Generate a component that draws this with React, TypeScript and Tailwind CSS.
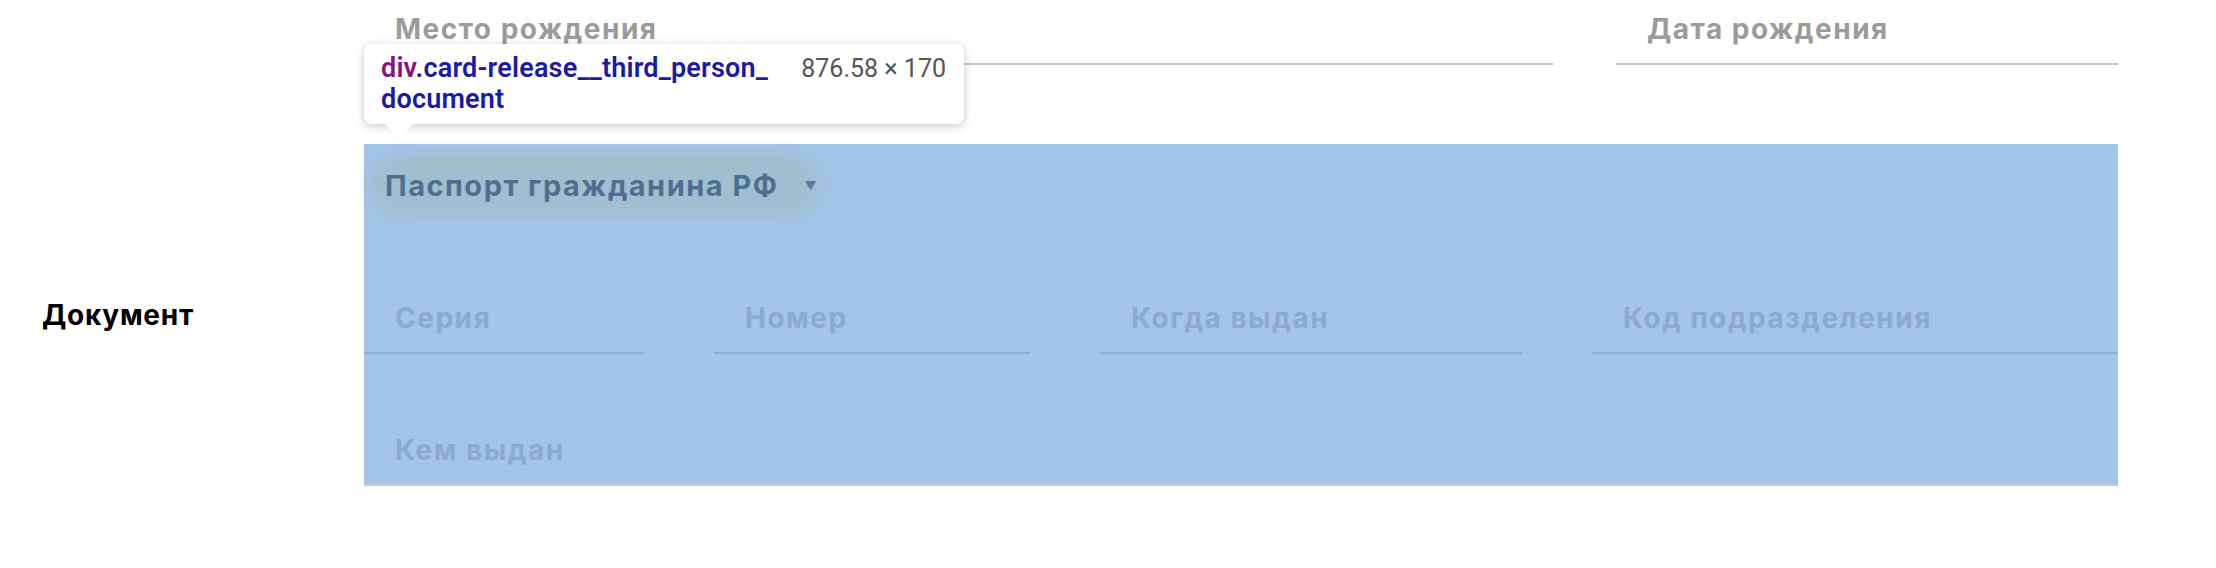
import React from "react";

const font = "font-['Inter','Noto_Sans',sans-serif]";

function Field({ label, className = "", tone = "top" }: { label: string; className?: string; tone?: "top" | "doc" }) {
  const colors = tone === "top" ? "border-[#C8C8C8] text-[#9B9B9B]" : "border-[#8EB0D4] text-[#8AABCF]";
  return (
    <div className={`h-[60px] shrink-0 border-b-2 pl-[31px] pt-[6px] text-[28px] font-bold leading-[36px] tracking-[1.5px] ${colors} ${className}`}>
      {label}
    </div>
  );
}

function Tooltip() {
  return (
    <div className="absolute left-[364px] top-[44px] z-10 w-[600px] rounded-[8px] bg-white pl-[17px] pr-[18px] pt-[9px] pb-[9px] shadow-[0_2px_10px_rgba(0,0,0,0.22)] font-['Roboto',sans-serif]">
      <div className="flex justify-between">
        <div className="text-[27px] font-semibold leading-[31px] tracking-[0.2px] text-[#1A1AA6]">
          <span className="text-[#881280]">div</span>.card-release__third_person_
          <br />
          document
        </div>
        <div className="text-[25px] leading-[31px] text-[#555555]">876.58 × 170</div>
      </div>
      <div className="absolute left-[21px] top-full h-0 w-0 border-x-[14px] border-t-[15px] border-x-transparent border-t-white" />
    </div>
  );
}

export default function App() {
  return (
    <div className={`relative h-[568px] w-[2216px] overflow-hidden bg-white ${font}`}>
      <Tooltip />

      <div className="flex pl-[364px] pt-[5px]">
        <Field label="Место рождения" className="w-[1189px]" />
        <Field label="Дата рождения" className="ml-[63px] w-[502px]" />
      </div>

      <div className="mt-[79px] flex items-center">
        <div className="w-[364px] pl-[42px] text-[28px] font-bold leading-[36px] tracking-[0.75px] text-black">Документ</div>
        <div className="w-[1754px] border-b-2 border-[#C8C8C8] bg-[#A2C5E8] bg-clip-padding">
          <div className="relative flex h-[78px] items-center pl-[21px] pt-[6px]">
            <div className="absolute left-[6px] top-[10px] h-[62px] w-[450px] rounded-full bg-[#9EBFCF] blur-[7px]" />
            <span className="relative text-[29px] font-bold leading-[36px] tracking-[1.5px] text-[#4F6F91]">Паспорт гражданина РФ</span>
            <span className="relative ml-[26px] text-[12px] text-[#5A7A9C]">▼</span>
          </div>

          <div className="mt-[72px] flex">
            <Field tone="doc" label="Серия" className="w-[280px]" />
            <Field tone="doc" label="Номер" className="ml-[70px] w-[316px]" />
            <Field tone="doc" label="Когда выдан" className="ml-[70px] w-[422px]" />
            <Field tone="doc" label="Код подразделения" className="ml-[70px] w-[526px]" />
          </div>

          <div className="mt-[72px] h-[58px] pl-[31px] pt-[6px] text-[28px] font-bold leading-[36px] tracking-[1.5px] text-[#8AABCF]">Кем выдан</div>
        </div>
      </div>
    </div>
  );
}
